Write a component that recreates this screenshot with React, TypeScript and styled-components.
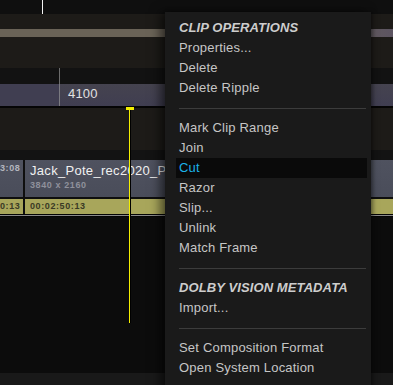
import React from 'react';
import styled, { createGlobalStyle } from 'styled-components';

const GlobalStyle = createGlobalStyle`
  html, body {
    margin: 0;
    padding: 0;
    background: #0c0c0c;
  }
  body {
    font-family: "Liberation Sans", Arial, sans-serif;
  }
`;

const Screen = styled.div`
  position: relative;
  width: 393px;
  height: 385px;
  overflow: hidden;
  display: flex;
  flex-direction: column;
  background: #0c0c0c;
`;

const Band = styled.div<{ h: number; bg: string }>`
  flex: 0 0 ${props => props.h}px;
  height: ${props => props.h}px;
  background: ${props => props.bg};
  display: flex;
  align-items: stretch;
  position: relative;
`;

const Tick = styled.div<{ x: number; color: string }>`
  margin-left: ${props => props.x}px;
  width: 1px;
  background: ${props => props.color};
`;

const RangeBar = styled.div`
  flex: 1;
  display: flex;
  align-items: center;
  background: linear-gradient(180deg, #45434f 0%, #403e51 100%);
`;

const FrameLabel = styled.span`
  margin-left: 8px;
  margin-top: -3px;
  color: #e2e2e2;
  font-size: 13px;
  letter-spacing: 0.2px;
`;

const ClipRow = styled.div`
  flex: 1;
  display: flex;
  gap: 2px;
  background: #0f0f0f;
`;

const Clip = styled.div<{ w?: number }>`
  ${props => (props.w ? `flex: 0 0 ${props.w}px;` : 'flex: 1;')}
  overflow: hidden;
  white-space: nowrap;
  background: linear-gradient(180deg, #4f525f 0%, #4a4d5a 100%);
  padding: 3px 0 0 5px;
  box-sizing: border-box;
`;

const ClipCut = styled(Clip)`
  padding: 3px 4px 0 0;
  text-align: right;
`;

const ClipName = styled.div`
  color: #f0f0f0;
  font-size: 13px;
  line-height: 15px;
  letter-spacing: 0.3px;
`;

const ClipMeta = styled.div<{ light?: boolean }>`
  color: ${props => (props.light ? '#b4b6be' : '#8f919b')};
  font-size: 9px;
  font-weight: bold;
  letter-spacing: 0.6px;
  margin-top: ${props => (props.light ? '0' : '2px')};
`;

const TimeRow = styled.div`
  flex: 1;
  display: flex;
  gap: 2px;
  background: #0f0f0f;
`;

const TimeCell = styled.div<{ w?: number; right?: boolean }>`
  ${props => (props.w ? `flex: 0 0 ${props.w}px;` : 'flex: 1;')}
  overflow: hidden;
  white-space: nowrap;
  background: #a8a65b;
  color: #3a3a25;
  font-size: 9px;
  font-weight: bold;
  letter-spacing: 0.6px;
  line-height: 15px;
  box-sizing: border-box;
  padding: ${props => (props.right ? '0 4px 0 0' : '0 0 0 5px')};
  text-align: ${props => (props.right ? 'right' : 'left')};
`;

const Playhead = styled.div`
  position: absolute;
  left: 129px;
  top: 107px;
  width: 1px;
  height: 216px;
  background: #f4ef00;
  border-right: 1px solid #000;
`;

const PlayheadCap = styled.div`
  position: absolute;
  left: 126px;
  top: 107px;
  width: 8px;
  height: 3px;
  background: #f4ef00;
`;

const Menu = styled.div`
  position: absolute;
  left: 165px;
  top: 12px;
  width: 206px;
  height: 380px;
  box-sizing: border-box;
  padding: 6px 4px 0 11px;
  background: #1a1a1a;
  box-shadow: -5px 0 10px rgba(0, 0, 0, 0.55), 2px 0 4px rgba(0, 0, 0, 0.4);
  display: flex;
  flex-direction: column;
`;

const MenuHeader = styled.div`
  height: 20px;
  line-height: 20px;
  padding-left: 3px;
  color: #cdcdcd;
  font-size: 13px;
  font-weight: bold;
  font-style: italic;
  letter-spacing: 0.1px;
`;

const MenuItem = styled.div<{ active?: boolean }>`
  height: 20px;
  line-height: 20px;
  padding-left: 3px;
  color: ${props => (props.active ? '#1bb2e8' : '#c6c6c6')};
  background: ${props => (props.active ? '#0a0a0a' : 'transparent')};
  font-size: 13px;
  letter-spacing: 0.2px;
  white-space: nowrap;
`;

const MenuDivider = styled.div`
  height: 1px;
  margin: 10px 1px 9px 3px;
  background: #3c3c3c;
`;

export default function App() {
  return (
    <>
      <GlobalStyle />
      <Screen>
        <Band h={14} bg="#0f0f0f">
          <Tick x={42} color="#f2f2f2" />
        </Band>
        <Band h={15} bg="#1d1b18" />
        <Band h={8} bg="linear-gradient(90deg, #6a6357 0%, #6a6357 80%, #5c5461 100%)" />
        <Band h={31} bg="#1d1b18" />
        <Band h={16} bg="#121212">
          <Tick x={59} color="#6c6c6c" />
        </Band>
        <Band h={22} bg="#403e51">
          <Tick x={59} color="#7a7a80" />
          <RangeBar>
            <FrameLabel>4100</FrameLabel>
          </RangeBar>
        </Band>
        <Band h={2} bg="#050505" />
        <Band h={42} bg="#1d1b18" />
        <Band h={10} bg="#131313" />
        <Band h={37} bg="#0f0f0f">
          <ClipRow>
            <ClipCut w={23}>
              <ClipMeta light>3:08</ClipMeta>
            </ClipCut>
            <Clip>
              <ClipName>Jack_Pote_rec2020_P</ClipName>
              <ClipMeta>3840 x 2160</ClipMeta>
            </Clip>
          </ClipRow>
        </Band>
        <Band h={2} bg="#0f0f0f" />
        <Band h={15} bg="#0f0f0f">
          <TimeRow>
            <TimeCell w={23} right>0:13</TimeCell>
            <TimeCell>00:02:50:13</TimeCell>
          </TimeRow>
        </Band>
        <Band h={1} bg="#050505" />
        <Band h={1} bg="#8a8a8a" />
        <Band h={1} bg="#050505" />
        <Band h={156} bg="#0c0c0c" />
        <Band h={12} bg="#191919" />

        <Playhead />
        <PlayheadCap />

        <Menu>
          <MenuHeader>CLIP OPERATIONS</MenuHeader>
          <MenuItem>Properties...</MenuItem>
          <MenuItem>Delete</MenuItem>
          <MenuItem>Delete Ripple</MenuItem>
          <MenuDivider />
          <MenuItem>Mark Clip Range</MenuItem>
          <MenuItem>Join</MenuItem>
          <MenuItem active>Cut</MenuItem>
          <MenuItem>Razor</MenuItem>
          <MenuItem>Slip...</MenuItem>
          <MenuItem>Unlink</MenuItem>
          <MenuItem>Match Frame</MenuItem>
          <MenuDivider />
          <MenuHeader>DOLBY VISION METADATA</MenuHeader>
          <MenuItem>Import...</MenuItem>
          <MenuDivider />
          <MenuItem>Set Composition Format</MenuItem>
          <MenuItem>Open System Location</MenuItem>
        </Menu>
      </Screen>
    </>
  );
}
